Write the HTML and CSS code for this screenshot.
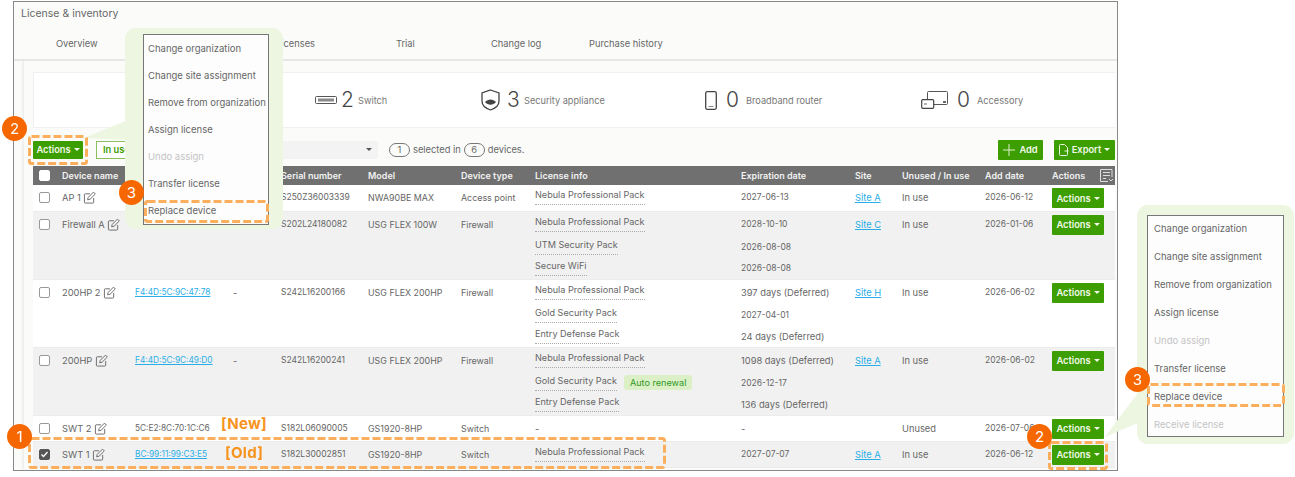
FILE: index.html
```html
<!DOCTYPE html>
<html lang="en">
<head>
<meta charset="utf-8">
<title>License &amp; inventory</title>
<link rel="stylesheet" href="styles.css">
</head>
<body>
<svg class="defs" aria-hidden="true">
  <symbol id="edit" viewBox="0 0 14 14"><path d="M11.500 7.500V12a1 1 0 0 1-1 1h-8a1 1 0 0 1-1-1V4a1 1 0 0 1 1-1h5M5 9.500l.6-2.600L11.300 1.200l2 2-5.700 5.700z" fill="none" stroke="currentColor" stroke-width="1"/></symbol>
</svg>
<div class="page">
  <main class="panel">
    <h1 class="title">License &amp; inventory</h1>
    <nav class="tabs">
      <a>Overview</a><a>Licenses</a><a>Trial</a><a>Change log</a><a>Purchase history</a>
    </nav>
    <section class="content">
      <div class="summary">
        <div class="stat">
          <svg width="22" height="8" viewBox="0 0 22 8"><rect x=".5" y=".5" width="21" height="7" rx="1" fill="none" stroke="#555"/><rect x="3" y="2.500" width="16" height="3" fill="#8a8a8a"/></svg>
          <b>2</b><span>Switch</span>
        </div>
        <div class="stat">
          <svg class="i-shield" width="19" height="22" viewBox="0 0 19 22"><path d="M9.500 1 18 4v8c0 5-4 7.500-8.500 9C5 19.500 1 17 1 12V4z" fill="none" stroke="#444" stroke-width="1.300"/><path d="M4 13c3-3.500 8-3.500 11 0-3 3.500-8 3.500-11 0z" fill="#444"/></svg>
          <b>3</b><span>Security appliance</span>
        </div>
        <div class="stat">
          <svg class="i-wide" width="12" height="19" viewBox="0 0 12 19"><rect x=".7" y=".7" width="10.600" height="17.600" rx="1.500" fill="none" stroke="#444" stroke-width="1.300"/><path d="M3.500 15.500h5" stroke="#888"/></svg>
          <b class="wide">0</b><span>Broadband router</span>
        </div>
        <div class="stat">
          <svg class="i-wide" width="27" height="18" viewBox="0 0 27 18"><rect x="6.500" y=".5" width="20" height="13" rx="1" fill="#fff" stroke="#555"/><rect x="22" y="10" width="3" height="2" fill="#666"/><rect x=".7" y="8.700" width="12" height="8.600" rx="1" fill="#fff" stroke="#444" stroke-width="1.200"/><path d="M3 13h3" stroke="#666"/></svg>
          <b class="wide">0</b><span>Accessory</span>
        </div>
      </div>
      <div class="toolbar">
        <button class="btn btn-main">Actions<i class="caret"></i></button>
        <div class="filter"><span class="tag">In use</span><span class="arrow"></span></div>
        <p class="count"><span class="pill">1</span> selected in <span class="pill">6</span> devices.</p>
        <button class="btn btn-add">
          <svg width="12" height="12" viewBox="0 0 12 12"><path d="M6 0v12M0 6h12" stroke="#dff0d0"/></svg>Add
        </button>
        <button class="btn btn-export">
          <svg width="10" height="12" viewBox="0 0 10 12"><path d="M5.500.5H1.500a1 1 0 0 0-1 1v9a1 1 0 0 0 1 1h6a1 1 0 0 0 1-1V3.500zM5.500 7h4" fill="none" stroke="#eaf5e0"/></svg>Export<i class="caret"></i>
        </button>
      </div>
      <table class="grid">
        <colgroup>
          <col class="c-check"><col class="c-name"><col class="c-mac"><col class="c-dash"><col class="c-serial"><col class="c-model"><col class="c-type"><col class="c-lic"><col class="c-exp"><col class="c-site"><col class="c-use"><col class="c-add"><col class="c-act">
        </colgroup>
        <thead>
          <tr>
            <th><span class="check check-head"></span></th><th>Device name</th><th></th><th></th><th>Serial number</th><th>Model</th><th>Device type</th><th>License info</th><th>Expiration date</th><th>Site</th><th>Unused / In use</th><th>Add date</th>
            <th class="th-act">Actions
              <svg class="cols-icon" width="15" height="15" viewBox="0 0 15 15"><path d="M13 9V1.500H1.500v12H9M4 4.500h7M4 7.500h7M4 10.500h3M10 11l2 2 2-2" fill="none" stroke="#ddd"/></svg>
            </th>
          </tr>
        </thead>
        <tbody>
          <tr class="r-s">
            <td><span class="check"></span></td><td>AP 1 <svg class="edit"><use href="#edit"/></svg></td><td></td><td></td><td class="n">S250Z36003339</td><td class="m">NWA90BE MAX</td><td class="m">Access point</td>
            <td class="lic"><div class="lines"><span class="l">Nebula Professional Pack</span></div></td><td class="n">2027-06-13</td><td><a class="link">Site A</a></td><td>In use</td><td class="n">2026-06-12</td><td class="act"><button class="btn">Actions<i class="caret"></i></button></td>
          </tr>
          <tr class="alt r-l">
            <td><span class="check"></span></td><td>Firewall A <svg class="edit"><use href="#edit"/></svg></td><td></td><td></td><td class="n">S202L24180082</td><td class="m">USG FLEX 100W</td><td class="m">Firewall</td>
            <td class="lic"><div class="lines"><span class="l">Nebula Professional Pack</span><span class="l">UTM Security Pack</span><span class="l">Secure WiFi</span></div></td>
            <td><div class="dates"><span class="n">2028-10-10</span><span class="n">2026-08-08</span><span class="n">2026-08-08</span></div></td><td><a class="link">Site C</a></td><td>In use</td><td class="n">2026-01-06</td><td class="act"><button class="btn">Actions<i class="caret"></i></button></td>
          </tr>
          <tr class="r-l">
            <td><span class="check"></span></td><td>200HP 2 <svg class="edit"><use href="#edit"/></svg></td><td class="mac"><a class="link">F4:4D:5C:9C:47:78</a></td><td>-</td><td class="n">S242L16200166</td><td class="m">USG FLEX 200HP</td><td class="m">Firewall</td>
            <td class="lic"><div class="lines"><span class="l">Nebula Professional Pack</span><span class="l">Gold Security Pack</span><span class="l">Entry Defense Pack</span></div></td>
            <td><div class="dates"><span>397 days (Deferred)</span><span class="n">2027-04-01</span><span>24 days (Deferred)</span></div></td><td><a class="link">Site H</a></td><td>In use</td><td class="n">2026-06-02</td><td class="act"><button class="btn">Actions<i class="caret"></i></button></td>
          </tr>
          <tr class="alt r-l">
            <td><span class="check"></span></td><td>200HP <svg class="edit"><use href="#edit"/></svg></td><td class="mac"><a class="link">F4:4D:5C:9C:49:D0</a></td><td>-</td><td class="n">S242L16200241</td><td class="m">USG FLEX 200HP</td><td class="m">Firewall</td>
            <td class="lic"><div class="lines"><span class="l">Nebula Professional Pack</span><span class="lrow"><span class="l">Gold Security Pack</span><em class="renew">Auto renewal</em></span><span class="l">Entry Defense Pack</span></div></td>
            <td><div class="dates"><span>1098 days (Deferred)</span><span class="n">2026-12-17</span><span>136 days (Deferred)</span></div></td><td><a class="link">Site A</a></td><td>In use</td><td class="n">2026-06-02</td><td class="act"><button class="btn">Actions<i class="caret"></i></button></td>
          </tr>
          <tr class="r-m">
            <td><span class="check"></span></td><td>SWT 2 <svg class="edit"><use href="#edit"/></svg></td><td class="mac">5C:E2:8C:70:1C:C6</td><td></td><td class="n">S182L06090005</td><td class="m">GS1920-8HP</td><td class="m">Switch</td>
            <td>-</td><td>-</td><td></td><td>Unused</td><td class="n">2026-07-06</td><td class="act"><button class="btn">Actions<i class="caret"></i></button></td>
          </tr>
          <tr class="alt r-s">
            <td><span class="check checked"><svg width="11" height="11" viewBox="0 0 11 11"><path d="M2.500 5.500l2 2 4-4.500" fill="none" stroke="#fff" stroke-width="1.300"/></svg></span></td><td>SWT 1 <svg class="edit"><use href="#edit"/></svg></td><td class="mac"><a class="link">BC:99:11:99:C3:E5</a></td><td></td><td class="n">S182L30002851</td><td class="m">GS1920-8HP</td><td class="m">Switch</td>
            <td class="lic"><div class="lines"><span class="l">Nebula Professional Pack</span></div></td><td class="n">2027-07-07</td><td><a class="link">Site A</a></td><td>In use</td><td class="n">2026-06-12</td><td class="act"><button class="btn">Actions<i class="caret"></i></button></td>
          </tr>
        </tbody>
      </table>
    </section>
  </main>

  <svg class="overlay" width="1295" height="477" viewBox="0 0 1295 477" aria-hidden="true">
    <path d="M128 120 84 138 128 140z" fill="#ecf6e0"/>
    <path d="M1140 390 1105 437 1140 422z" fill="#ecf6e0"/>
  </svg>

  <aside class="callout callout-left">
    <ul class="menu">
      <li>Change organization</li><li>Change site assignment</li><li>Remove from organization</li><li>Assign license</li><li class="off">Undo assign</li><li>Transfer license</li><li>Replace device</li>
    </ul>
  </aside>
  <aside class="callout callout-right">
    <ul class="menu">
      <li>Change organization</li><li>Change site assignment</li><li>Remove from organization</li><li>Assign license</li><li class="off">Undo assign</li><li>Transfer license</li><li>Replace device</li><li class="off">Receive license</li>
    </ul>
  </aside>

  <svg class="overlay dashes" width="1295" height="477" viewBox="0 0 1295 477" aria-hidden="true">
    <rect x="29.500" y="136.500" width="57" height="27" rx="2"/>
    <rect x="145.500" y="201.500" width="122" height="20" rx="2"/>
    <rect x="29.500" y="438.500" width="635" height="29" rx="2"/>
    <rect x="1049.500" y="442.500" width="57" height="26" rx="2"/>
    <rect x="1148.500" y="384.500" width="135" height="21" rx="2"/>
  </svg>

  <span class="note n-new">[New]</span>
  <span class="note n-old">[Old]</span>

  <span class="num n1">1</span>
  <span class="num n2a">2</span>
  <span class="num n2b">2</span>
  <span class="num n3a">3</span>
  <span class="num n3b">3</span>
</div>
</body>
</html>
```
FILE: styles.css
```css
* { box-sizing: border-box; }
html, body { margin: 0; padding: 0; background: #fff; }
body { font-family: "Inter", "Noto Sans", sans-serif; font-size: 9.300px; color: #666; }
.defs { display: none; }
.page { position: relative; width: 1295px; height: 477px; overflow: hidden; filter: blur(.3px); }

.panel { margin: 1px 0 0 13px; width: 1105px; height: 470px; border: 1px solid #888; background: #fbfcfa; }
.title { margin: 0; padding: 5px 0 0 7px; height: 22px; font-size: 10.500px; font-weight: 400; line-height: 14px; color: #666; }
.tabs { display: grid; grid-template-columns: 220px 120px 95px 98px auto; height: 37px; padding: 13px 0 0 42px; border-bottom: 2px solid #e6e6e6; line-height: 14px; font-size: 9.300px; }
.content { margin-left: 8px; padding: 11px 0 0 9px; height: 408px; border-left: 2px solid #f0f0f0; }

.summary { display: grid; grid-template-columns: 166px 224px 216px 1fr; height: 56px; width: 1082px; padding-left: 281px; background: #fff; border: 1px solid #efefef; border-right: 0; align-items: center; }
.stat { display: flex; align-items: center; gap: 4px; }
.stat b { width: 13px; font-size: 21px; font-weight: 300; color: #444; line-height: 24px; }
.stat b.wide { width: 16px; }
.i-shield { margin-right: 3px; }
.i-wide { margin-right: 5px; }
.stat span { font-size: 9.200px; color: #777; }

.toolbar { display: flex; align-items: center; width: 1082px; height: 38px; padding-top: 5px; }
.btn { display: inline-flex; align-items: center; justify-content: center; gap: 3px; width: 52px; height: 20px; padding: 0; border: 0; border-radius: 1px; background: #3c9e00; color: #f2f9ea; font: 600 9.300px "Inter", sans-serif; }
.btn-main { width: 50px; height: 18px; }
.caret { display: inline-block; width: 0; height: 0; border: 3px solid transparent; border-top-color: #f2f9ea; border-bottom: 0; }
.filter { display: flex; align-items: center; width: 282px; height: 18px; margin-left: 13px; background: #f3f3f3; border-radius: 2px; }
.tag { width: 60px; height: 18px; padding: 2px 0 0 6px; background: #fff; border: 1px solid #8cc05c; color: #3c9e00; font-weight: 600; }
.arrow { margin-left: auto; margin-right: 6px; width: 0; height: 0; border: 3px solid transparent; border-top-color: #555; border-bottom: 0; }
.count { display: flex; align-items: center; gap: 3px; margin: 0 0 0 11px; white-space: nowrap; }
.pill { display: inline-block; width: 21px; height: 14px; line-height: 12px; text-align: center; border: 1px solid #777; border-radius: 7px; }
.btn-add { width: 45px; margin-left: auto; gap: 4px; }
.btn-export { width: 61px; margin-left: 11px; gap: 3px; }

.grid { width: 1082px; table-layout: fixed; border-collapse: collapse; }
.c-check { width: 29px; } .c-name { width: 73px; } .c-mac { width: 98px; } .c-dash { width: 48px; } .c-serial { width: 87px; } .c-model { width: 93px; } .c-type { width: 74px; } .c-lic { width: 206px; } .c-exp { width: 114px; } .c-site { width: 47px; } .c-use { width: 83px; } .c-add { width: 67px; } .c-act { width: 63px; }
.grid th { height: 19px; padding: 0; background: #707070; color: #f2f2f2; text-align: left; font-size: 9px; font-weight: 600; white-space: nowrap; position: relative; }
.grid td { padding: 6px 0 0; vertical-align: top; line-height: 13px; white-space: nowrap; background: #fff; border-bottom: 1px solid #ececec; }
.grid tr.alt td { background: #f1f1f1; }
.r-s td, .r-m td { height: 26px; } .r-l td { height: 68px; }
.grid td.act { padding-top: 3px; }
.grid td.lic { padding-top: 3px; font-size: 9.100px; }
.n { font-size: 8.500px; }
.m { font-size: 8.900px; }
.mac { font-size: 8.300px; }
.cols-icon { position: absolute; right: 1px; top: 2px; }

.check { display: block; width: 11px; height: 11px; margin: 1px 0 0 6px; background: #fff; border: 1px solid #999; border-radius: 2px; }
.check-head { margin-top: 0; border-color: #fff; }
.checked { background: #555; border-color: #555; position: relative; }
.checked svg { position: absolute; left: -1px; top: -1px; }
.edit { display: inline-block; width: 13px; height: 13px; vertical-align: -3px; color: #666; }
.link { color: #2aaee8; text-decoration: underline; }

.lines { display: flex; flex-direction: column; align-items: flex-start; gap: 6px; }
.lines > :nth-child(3) { margin-top: -2px; }
.lines .l { display: inline-block; padding-bottom: 3px; border-bottom: 1px dotted #aaa; line-height: 13px; }
.lrow { display: flex; align-items: center; gap: 7px; }
.renew { padding: 1px 6px; background: #dcf0c8; color: #2f9a1e; border-radius: 3px; font-style: normal; line-height: 13px; }
.dates { display: flex; flex-direction: column; gap: 10px; }
.dates > :nth-child(3) { margin-top: -2px; }

.overlay { position: absolute; left: 0; top: 0; pointer-events: none; }
.dashes rect { fill: none; stroke: #fbaf5d; stroke-width: 3; stroke-dasharray: 8 3; }
.callout { position: absolute; background: #ecf6e0; border-radius: 11px; }
.callout-left { left: 125px; top: 28px; width: 158px; height: 201px; padding: 6px 14px 4px 18px; }
.callout-right { left: 1137px; top: 205px; width: 157px; height: 239px; padding: 10px 10px 7px 10px; }
.menu { list-style: none; margin: 0; padding: 0 0 0 4px; height: 100%; background: #fdfdfd; border: 1px solid #777; font-size: 9.500px; }
.menu li { line-height: 27px; color: #666; white-space: nowrap; }
.menu .off { color: #c4c4c4; }
.callout-right .menu { padding-left: 6px; }
.callout-right .menu li { line-height: 28px; }
.callout-right .menu li:first-child { margin-top: -1px; }

.note { position: absolute; color: #f7931e; font-size: 15px; font-weight: 700; line-height: 16px; letter-spacing: .3px; }
.n-new { left: 221px; top: 416px; }
.n-old { left: 225px; top: 445px; }

.num { position: absolute; width: 25px; height: 25px; border-radius: 50%; background: #f76700; color: #fff; font-size: 15px; line-height: 25px; text-align: center; }
.n1 { left: 7px; top: 424px; }
.n2a { left: 2px; top: 116px; }
.n2b { left: 1027px; top: 424px; }
.n3a { left: 119px; top: 180px; }
.n3b { left: 1125px; top: 367px; }
```
